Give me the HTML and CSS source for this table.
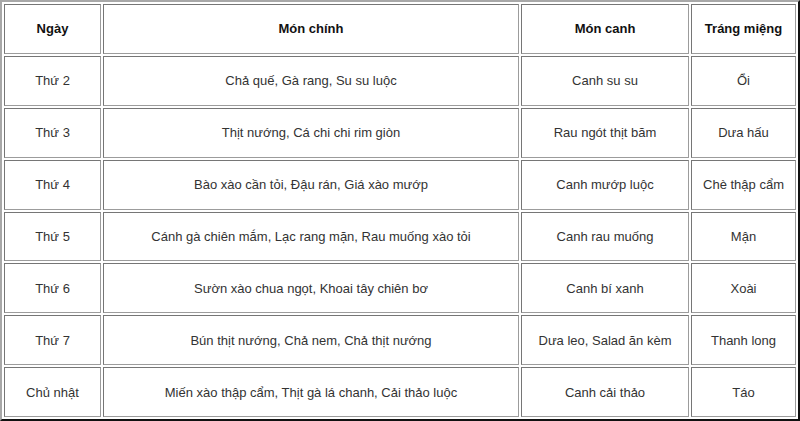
FILE: index.html
```html
<!DOCTYPE html>
<html lang="vi">
<head>
<meta charset="utf-8">
<link rel="stylesheet" href="styles.css">
</head>
<body>
<table class="menu">
  <colgroup>
    <col class="c1"><col class="c2"><col class="c3"><col class="c4">
  </colgroup>
  <thead>
    <tr><th>Ngày</th><th>Món chính</th><th>Món canh</th><th>Tráng miệng</th></tr>
  </thead>
  <tbody>
    <tr><td>Thứ 2</td><td>Chả quế, Gà rang, Su su luộc</td><td>Canh su su</td><td>Ổi</td></tr>
    <tr><td>Thứ 3</td><td>Thịt nướng, Cá chi chi rim giòn</td><td>Rau ngót thịt băm</td><td>Dưa hấu</td></tr>
    <tr><td>Thứ 4</td><td>Bào xào cần tỏi, Đậu rán, Giá xào mướp</td><td>Canh mướp luộc</td><td>Chè thập cẩm</td></tr>
    <tr><td>Thứ 5</td><td>Cánh gà chiên mắm, Lạc rang mặn, Rau muống xào tỏi</td><td>Canh rau muống</td><td>Mận</td></tr>
    <tr><td>Thứ 6</td><td>Sườn xào chua ngọt, Khoai tây chiên bơ</td><td>Canh bí xanh</td><td>Xoài</td></tr>
    <tr><td>Thứ 7</td><td>Bún thịt nướng, Chả nem, Chả thịt nướng</td><td>Dưa leo, Salad ăn kèm</td><td>Thanh long</td></tr>
    <tr><td>Chủ nhật</td><td>Miến xào thập cẩm, Thịt gà lá chanh, Cải thảo luộc</td><td>Canh cải thảo</td><td>Táo</td></tr>
  </tbody>
</table>
</body>
</html>
```
FILE: styles.css
```css
html, body {
  margin: 0;
  padding: 0;
  background: #fff;
}
.menu {
  width: 800px;
  height: 421px;
  table-layout: fixed;
  border-collapse: separate;
  border-spacing: 2px;
  border-style: solid;
  border-width: 2px;
  border-color: #a8a8a8 #111 #111 #a8a8a8;
  font-family: "Liberation Sans", Arial, sans-serif;
  font-size: 13px;
  color: #333;
}
.c1 { width: 97px; }
.c2 { width: 416px; }
.c3 { width: 168px; }
.c4 { width: 105px; }
.menu tr {
  height: 49.875px;
}
.menu th, .menu td {
  border: 1px solid;
  border-color: #767676 #9c9c9c #9c9c9c #767676;
  text-align: center;
  vertical-align: middle;
  padding: 0;
}
.menu th {
  font-weight: bold;
  color: #111;
}
```
